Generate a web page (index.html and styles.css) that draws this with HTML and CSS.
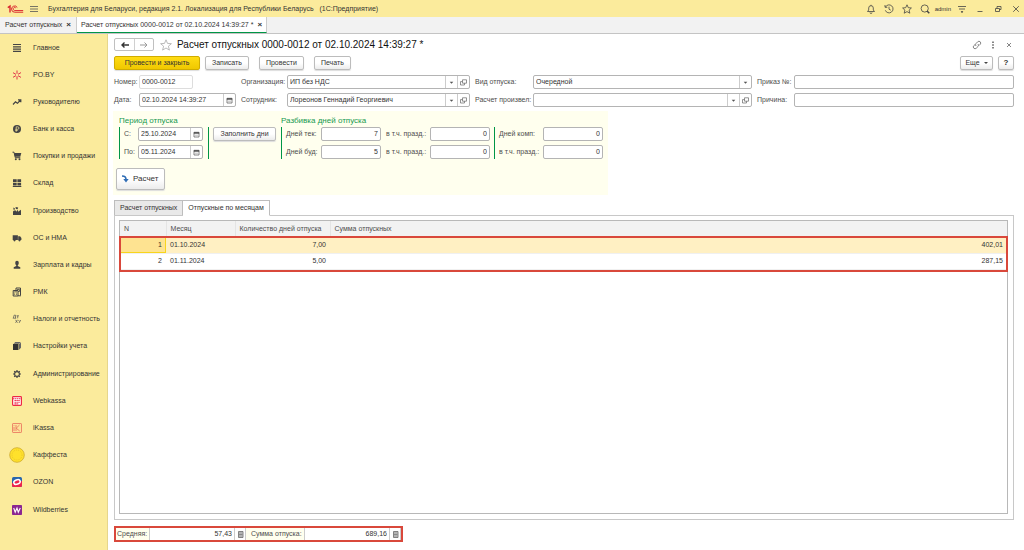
FILE: index.html
```html
<!DOCTYPE html>
<html lang="ru">
<head>
<meta charset="utf-8">
<title>Расчет отпускных</title>
<link rel="stylesheet" href="styles.css">
</head>
<body>
<svg class="defs" aria-hidden="true">
  <symbol id="cal" viewBox="0 0 7 7"><path d="M1 1.500h5v4.500H1z" fill="#fff" stroke="#666" stroke-width=".8"/><path d="M1 1.200h5v1.300H1z" fill="#555" stroke="#555" stroke-width=".5"/><path d="M2 4.200h3" stroke="#bbb"/></symbol>
  <symbol id="open" viewBox="0 0 7 7"><path d="M2.500.8h4v3.400h-4zM2.500 2.600h-2v3.400h4V4.200" fill="none" stroke="#666" stroke-width=".7"/></symbol>
  <symbol id="down" viewBox="0 0 7 7"><path d="M1.700 2.700h3.600L3.500 4.700z" fill="#555"/></symbol>
  <symbol id="calc" viewBox="0 0 7 7"><path d="M1.500.5h4.500v6H1.500z" fill="#ddd" stroke="#666" stroke-width=".8"/><path d="M2 2h3.500M2 3.500h3.500M2 5h3.500" stroke="#666" stroke-width=".7"/></symbol>
</svg>
<header class="titlebar">
  <svg class="logo" viewBox="0 0 17 10"><g fill="none" stroke="#d9252c"><path d="M.8 3.600l2.200-1.600V8.500" stroke-width="1.400"/><path d="M10.300 3.500A3.100 3.100 0 1 0 7.800 8.200h8.400" stroke-width="1"/><path d="M8.900 4.100A1.500 1.500 0 1 0 7.800 6.500h8.400" stroke-width=".9"/></g></svg>
  <svg class="burger" viewBox="0 0 8 8"><path d="M0 1.500h8M0 4h8M0 6.500h8" stroke="#555" stroke-width=".8"/></svg>
  <span class="apptitle">Бухгалтерия для Беларуси, редакция 2.1. Локализация для Республики Беларусь&nbsp;&nbsp; (1С:Предприятие)</span>
  <div class="tools">
    <button aria-label="Уведомления"><svg viewBox="0 0 10 10"><path d="M1.500 7.500h7L7.300 6V4a2.300 2.300 0 0 0-4.600 0v2zM4 8.500a1 1 0 0 0 2 0M5 .8v1" /></svg></button>
    <button aria-label="История"><svg viewBox="0 0 10 10"><path d="M1.500 3A4 4 0 1 1 1.300 6.300M1 1v2.300h2.300M5 2.700v2.500l1.800 1"/></svg></button>
    <button aria-label="Избранное"><svg viewBox="0 0 10 10"><path d="M5 .8l1.300 2.900 3.100.3-2.300 2.100.7 3.100L5 7.600 2.200 9.200l.7-3.100L.6 4l3.100-.3z"/></svg></button>
    <button aria-label="Поиск"><svg viewBox="0 0 10 10"><circle cx="4.700" cy="4.500" r="3.600"/><path d="M7 7l2.300 2.300" stroke-width="1.500"/></svg></button>
    <span class="user">admin</span>
    <button aria-label="Настройки"><svg viewBox="0 0 10 10"><path d="M1 2.500h8M2 5h6M4 8h2"/><path d="M3.700 7.300h2.600L5 8.800z" fill="#444" stroke="none"/></svg></button>
    <button aria-label="Свернуть"><svg viewBox="0 0 10 10"><path d="M2.500 7.500h5"/></svg></button>
    <button aria-label="Развернуть"><svg viewBox="0 0 10 10"><path d="M2.500 4.500h4v3h-4zM4 4.500v-2h4v3H6.500"/></svg></button>
    <button aria-label="Закрыть"><svg viewBox="0 0 10 10"><path d="M2.200 2.200l5.600 5.600M7.800 2.200L2.200 7.800"/></svg></button>
  </div>
</header>
<div class="windows">
  <button class="wtab">Расчет отпускных <b>×</b></button>
  <button class="wtab current">Расчет отпускных 0000-0012 от 02.10.2024 14:39:27 * <b>×</b></button>
</div>
<div class="body">
<nav class="side">
  <a href="#"><svg viewBox="0 0 10 10"><path d="M1 1.500h8M1 3.800h8M1 6.100h8M1 8.400h8" stroke="#444" stroke-width="1.200"/></svg>Главное</a>
  <a href="#"><svg viewBox="0 0 10 10"><path d="M5 .5v3.300M5 6.200v3.300M1 2.700l3 1.700M6 5.700l3 1.700M1 7.300l3-1.700M6 4.300l3-1.700" stroke="#e0344a" stroke-width="1"/></svg>PO.BY</a>
  <a href="#"><svg viewBox="0 0 10 10"><path d="M1 7.500l2.500-2.600 2 1.400L8.500 3M6 2.800h2.800v2.500" fill="none" stroke="#444" stroke-width="1.200"/></svg>Руководителю</a>
  <a href="#"><svg viewBox="0 0 10 10"><circle cx="5" cy="5" r="4" fill="#444"/><path d="M4.200 7.800V2.800h1.500a1.200 1.200 0 0 1 0 2.500H3.300M3.300 6.500h2.400" fill="none" stroke="#fbeb9c" stroke-width=".7"/></svg>Банк и касса</a>
  <a href="#"><svg viewBox="0 0 10 10"><path d="M.5 1.200H2l1.300 5.500h5" fill="none" stroke="#444"/><path d="M2.200 2h7.100l-1 3.800H3z" fill="#444"/><circle cx="3.800" cy="8.300" r="1" fill="#444"/><circle cx="7.500" cy="8.300" r="1" fill="#444"/></svg>Покупки и продажи</a>
  <a href="#"><svg viewBox="0 0 10 10"><path d="M1 1.300h3.700v2.900H1zM5.400 1.300h3.700v2.900H5.400zM1 4.900h3.700v2.600H1zM5.400 4.900h3.700v2.600H5.400zM.8 8h8.500v.9H.8z" fill="#444"/></svg>Склад</a>
  <a href="#"><svg viewBox="0 0 10 10"><path d="M1 9V5.500l1-1h2v1.200l2-2v2l3-2V9zM1.300 1.500l1.700 1-.4 1.300H1.500zM3.500 1l2.700.5-.6 1.800-1.700-.3z" fill="#444"/></svg>Производство</a>
  <a href="#"><svg viewBox="0 0 10 10"><path d="M.7 2.300h5.200v4.800H.7zM6.200 3.300h1.900l1.300 1.800v2H6.200z" fill="#444"/><circle cx="2.500" cy="7.300" r="1.100" fill="#444"/><circle cx="7.500" cy="7.300" r="1.100" fill="#444"/></svg>ОС и НМА</a>
  <a href="#"><svg viewBox="0 0 10 10"><ellipse cx="5" cy="3" rx="1.800" ry="2.200" fill="#444"/><path d="M1.700 8.700V7.200L4.200 6V4h1.600v2l2.500 1.200v1.500z" fill="#444"/></svg>Зарплата и кадры</a>
  <a href="#"><svg viewBox="0 0 10 10"><path d="M4 3V1h4.500v7.500M1.200 3.500H6v5.500H1.200zM6 8.800h2.800" fill="none" stroke="#444"/><path d="M2.200 4.800h2.900M5 2.500h2.500v2H6M2.300 6.200h.8M4 6.200h.8M2.300 7.500h.8M4 7.500h.8" fill="none" stroke="#444" stroke-width=".8"/></svg>РМК</a>
  <a href="#"><svg viewBox="0 0 10 10"><path d="M.8 4.200h3.400M1.400 4L2.100 1.200h1.400v3M4.500 1.800h2.500M5.700 1.800v2.500M3.500 5.800l2 3M5.500 5.800l-2 3M6.500 6l1 1.500M8.800 6L7 9" fill="none" stroke="#555" stroke-width=".7"/></svg>Налоги и отчетность</a>
  <a href="#"><svg viewBox="0 0 10 10"><path d="M1 3h5.500v6H1z" fill="#333"/><path d="M1.500 2.700L3.300 1h5.500L7 2.700zM7 3.200l2-1.800v5.400L7 8.800z" fill="#666"/></svg>Настройки учета</a>
  <a href="#"><svg viewBox="0 0 10 10"><circle cx="5" cy="5" r="2.400" fill="none" stroke="#444" stroke-width="1.100"/><path d="M5 1v1.500M5 7.500V9M1 5h1.500M7.500 5H9M2.200 2.200l1 1M6.800 6.800l1 1M7.800 2.200l-1 1M3.200 6.800l-1 1" stroke="#444" stroke-width="1.200"/></svg>Администрирование</a>
  <a href="#"><svg viewBox="0 0 10 10"><rect x=".6" y=".6" width="8.800" height="8.800" rx=".8" fill="#fff" stroke="#ee2944" stroke-width="1.200"/><path d="M1 2.700h8M2.500 4.500h5.700M2.500 6.200h5.700M2.500 7.900h4" stroke="#ee2944" stroke-width="1.100" stroke-dasharray="1.400 .5"/></svg>Webkassa</a>
  <a href="#"><svg viewBox="0 0 10 10"><rect x=".5" y=".5" width="9" height="9" rx=".6" fill="#fde39a" stroke="#e8715a" stroke-width=".8"/><path d="M2 4v4M2 2.300v.8M4 2v6M7.500 2L4.200 5.200 7.700 8" fill="none" stroke="#e8715a" stroke-width=".8"/></svg>iKassa</a>
  <a href="#"><svg class="coin" viewBox="0 0 16 16"><circle cx="8" cy="8" r="7.300" fill="#ffe12b" stroke="#cda931" stroke-width=".8"/><circle cx="8" cy="8" r="5" fill="none" stroke="#e3b92a" stroke-width=".7" stroke-dasharray="1 1"/></svg>Каффеста</a>
  <a href="#"><svg viewBox="0 0 10 10"><rect width="10" height="10" rx="1.500" fill="#2866ad"/><path d="M0 6l10-2v4.500A1.500 1.500 0 0 1 8.500 10h-7A1.500 1.500 0 0 1 0 8.500z" fill="#ec254d"/><ellipse cx="5" cy="5" rx="3.300" ry="2.200" fill="#ec254d" stroke="#fff" stroke-width="1.500" transform="rotate(-20 5 5)"/></svg>OZON</a>
  <a href="#"><svg viewBox="0 0 10 10"><rect width="10" height="10" rx=".8" fill="#8b2791"/><path d="M1.700 3l1.500 4.200L5 3l1.300 4.200L8.300 3" fill="none" stroke="#fff" stroke-width="1.100"/></svg>Wildberries</a>
</nav>
<main>
  <div class="head">
    <div class="navbtns"><button aria-label="Назад"><svg viewBox="0 0 10 8"><path d="M9 4H2M4.500 1.500L2 4l2.500 2.500" fill="none" stroke="#333" stroke-width="1.400"/></svg></button><button aria-label="Вперед"><svg viewBox="0 0 10 8"><path d="M1 4h7M5.500 1.500L8 4 5.500 6.500" fill="none" stroke="#999"/></svg></button></div>
    <svg class="star" viewBox="0 0 12 12"><path d="M6 .8l1.500 3.600 3.900.3-3 2.500 1 3.900L6 9l-3.400 2.100 1-3.900-3-2.500 3.900-.3z" fill="none" stroke="#aaa" stroke-width=".8"/></svg>
    <h1>Расчет отпускных 0000-0012 от 02.10.2024 14:39:27 *</h1>
    <div class="headtools">
      <button aria-label="Ссылка"><svg viewBox="0 0 10 10"><path d="M4 6a1.900 1.900 0 0 1 0-2.500L5.700 1.800a1.700 1.700 0 0 1 2.500 2.500L7 5.500M6 4a1.900 1.900 0 0 1 0 2.500L4.300 8.200a1.700 1.700 0 0 1-2.500-2.500L3 4.500"/></svg></button>
      <button aria-label="Меню"><svg viewBox="0 0 10 10"><path d="M5 1.500v1.600M5 4.200v1.600M5 6.900v1.600" stroke-width="1.600"/></svg></button>
      <button aria-label="Закрыть"><svg viewBox="0 0 10 10"><path d="M3 3l4 4M7 3L3 7"/></svg></button>
    </div>
  </div>
  <div class="cmds">
    <button class="btn primary">Провести и закрыть</button>
    <button class="btn">Записать</button>
    <button class="btn mid">Провести</button>
    <button class="btn mid">Печать</button>
    <span class="right"><button class="btn more">Еще <i></i></button><button class="btn help">?</button></span>
  </div>
  <div class="form">
    <label for="num">Номер:</label><div class="field soft num"><input id="num" value="0000-0012"></div>
    <label for="org">Организация:</label><div class="field"><input id="org" value="ИП без НДС"><button aria-label="Выбрать"><svg><use href="#down"/></svg></button><button aria-label="Открыть"><svg><use href="#open"/></svg></button></div>
    <label for="kind">Вид отпуска:</label><div class="field"><input id="kind" value="Очередной"><button aria-label="Выбрать"><svg><use href="#down"/></svg></button></div>
    <label for="order">Приказ №:</label><div class="field"><input id="order"></div>
    <label for="date">Дата:</label><div class="field"><input id="date" value="02.10.2024 14:39:27"><button aria-label="Календарь"><svg><use href="#cal"/></svg></button></div>
    <label for="emp">Сотрудник:</label><div class="field"><input id="emp" value="Лореонов Геннадий Георгиевич"><button aria-label="Выбрать"><svg><use href="#down"/></svg></button><button aria-label="Открыть"><svg><use href="#open"/></svg></button></div>
    <label for="by">Расчет произвел:</label><div class="field"><input id="by"><button aria-label="Выбрать"><svg><use href="#down"/></svg></button><button aria-label="Открыть"><svg><use href="#open"/></svg></button></div>
    <label for="why">Причина:</label><div class="field"><input id="why"></div>
  </div>
  <section class="calcbox">
    <div class="groups">
      <div class="group period">
        <h2>Период отпуска</h2>
        <div class="cols">
          <div class="pairs dates">
            <label for="from">С:</label><div class="field"><input id="from" value="25.10.2024"><button aria-label="Календарь"><svg><use href="#cal"/></svg></button></div>
            <label for="to">По:</label><div class="field"><input id="to" value="05.11.2024"><button aria-label="Календарь"><svg><use href="#cal"/></svg></button></div>
          </div>
          <div class="fill"><button class="btn">Заполнить дни</button></div>
        </div>
      </div>
      <div class="group">
        <h2>Разбивка дней отпуска</h2>
        <div class="cols">
          <div class="pairs days">
            <label for="d1">Дней тек:</label><div class="field n"><input id="d1" value="7"></div>
            <label for="h1">в т.ч. празд.:</label><div class="field n"><input id="h1" value="0"></div>
            <label for="d2">Дней буд:</label><div class="field n"><input id="d2" value="5"></div>
            <label for="h2">в т.ч. празд.:</label><div class="field n"><input id="h2" value="0"></div>
          </div>
          <div class="pairs comp">
            <label for="c1">Дней комп:</label><div class="field n"><input id="c1" value="0"></div>
            <label for="c2">в т.ч. празд.:</label><div class="field n"><input id="c2" value="0"></div>
          </div>
        </div>
      </div>
    </div>
    <button class="btn run"><svg viewBox="0 0 8 8"><path d="M1 1c3 0 4 1 4 3.500" fill="none" stroke="#2f6db5" stroke-width="1.700"/><path d="M2.300 4h5.400L5 7.500z" fill="#2f6db5"/></svg>Расчет</button>
  </section>
  <div class="tabs"><button>Расчет отпускных</button><button class="on">Отпускные по месяцам</button></div>
  <div class="panel">
    <div class="grid">
      <table>
        <thead><tr><th class="c1">N</th><th class="c2">Месяц</th><th class="c3">Количество дней отпуска</th><th>Сумма отпускных</th></tr></thead>
        <tbody>
          <tr class="sel"><td class="r cell">1</td><td>01.10.2024</td><td class="r">7,00</td><td class="r">402,01</td></tr>
          <tr><td class="r">2</td><td>01.11.2024</td><td class="r">5,00</td><td class="r">287,15</td></tr>
        </tbody>
      </table>
      <div class="mark"></div>
    </div>
  </div>
  <div class="totals">
    <label for="avg">Средняя:</label><div class="tot"><input id="avg" value="57,43"><button aria-label="Калькулятор"><svg><use href="#calc"/></svg></button></div>
    <label for="sum" class="second">Сумма отпуска:</label><div class="tot"><input id="sum" value="689,16"><button aria-label="Калькулятор"><svg><use href="#calc"/></svg></button></div>
  </div>
</main>
</div>
</body>
</html>
```
FILE: styles.css
```css
* { box-sizing: border-box; }
body {
  margin: 0;
  min-height: 100vh;
  display: flex;
  flex-direction: column;
  font: 7px/10px "Liberation Sans", Arial, sans-serif;
  color: #333;
  background: #fff;
}
button, input { font: inherit; color: inherit; margin: 0; padding: 0; border: 0; background: none; }
svg { display: block; flex: none; }
.defs { position: absolute; width: 0; height: 0; }

.titlebar { display: flex; align-items: center; height: 17px; padding: 0 3px 0 7px; background: #fbeb9c; }
.logo { width: 17px; height: 10px; }
.burger { width: 8px; height: 8px; margin: 0 10px 0 6px; }
.tools { margin-left: auto; display: flex; align-items: center; gap: 8px; }
.tools svg { width: 10px; height: 10px; fill: none; stroke: #444; stroke-width: 0.8; }
.user { font-size: 6px; margin: 0 -2px 0 -3px; }

.windows { display: flex; height: 17px; background: #f2f2f2; border-bottom: 1px solid #c4c4c4; }
.wtab { padding: 0 5px; border-right: 1px solid #ccc; white-space: nowrap; }
.wtab b { font-size: 8px; margin-left: 2px; }
.wtab.current { background: #fff; border-bottom: 1px solid #009646; padding: 0 4px; }

.body { flex: 1; display: flex; }
.side {
  width: 108px;
  flex: none;
  display: flex;
  flex-direction: column;
  padding-bottom: 27px;
  background: #fbeb9c;
  border-right: 1px solid #e6d68c;
}
.side a { flex: 1; display: flex; align-items: center; gap: 11px; padding-left: 12px; color: #333; text-decoration: none; white-space: nowrap; }
.side svg { width: 10px; height: 10px; }
.side .coin { width: 16px; height: 16px; margin: 0 -3px; }

main { flex: 1; min-width: 0; display: flex; flex-direction: column; padding: 4px 10px 8px 6px; }
.head { display: flex; align-items: center; height: 13px; }
.navbtns { display: flex; border: 1px solid #c0c0c0; border-radius: 2px; }
.navbtns button { width: 19px; height: 11px; display: grid; place-items: center; }
.navbtns button + button { border-left: 1px solid #d0d0d0; }
.navbtns svg { width: 10px; height: 8px; }
.star { width: 12px; height: 12px; margin: 0 5px 0 6px; }
h1 { margin: 0; font-size: 10px; line-height: 13px; font-weight: 400; color: #111; white-space: nowrap; }
.headtools { margin-left: auto; display: flex; gap: 6px; }
.headtools svg { width: 10px; height: 10px; fill: none; stroke: #666; stroke-width: 0.8; }

.cmds { display: flex; gap: 5px; margin-top: 5px; }
.btn {
  height: 14px;
  padding: 0 6px;
  border: 1px solid #bcbcbc;
  border-radius: 2px;
  background: linear-gradient(#fff 50%, #ececec);
  box-shadow: 0 1px 1px #ddd;
  white-space: nowrap;
}
.primary { width: 86px; background: linear-gradient(#ffdc14, #f0c800); border-color: #d0ac00; }
.mid { margin-left: 5px; }
.right { margin-left: auto; display: flex; gap: 5px; }
.more { width: 33px; padding: 0; }
.more i { display: inline-block; margin: 0 0 1px 2px; border: 2px solid transparent; border-top-color: #444; border-bottom: 0; }
.help { width: 16px; padding: 0; font-size: 8px; font-weight: 700; }

.form {
  display: grid;
  grid-template-columns: 25px 97px 51px 183fr 63px 219fr 42px 220fr;
  grid-auto-rows: 14px;
  row-gap: 4px;
  margin-top: 5px;
  align-items: center;
}
label { color: #4d4d4d; white-space: nowrap; }
.form label { padding-left: 5px; }
.form label:nth-of-type(4n + 1) { padding-left: 0; }
.field { display: flex; min-width: 0; height: 14px; border: 1px solid #b4b4b4; border-radius: 2px; background: #fff; }
.field input { flex: 1; width: 0; min-width: 0; padding: 0 2px; }
.field button { width: 12px; display: grid; place-items: center; border-left: 1px solid #ccc; }
.field svg, .tot svg { width: 7px; height: 7px; }
.soft { border-color: #ddd; }
.num { width: 54px; }
.n input { text-align: right; }

.calcbox { width: 495px; height: 84px; margin: 4px 0 0 -1px; padding: 4px 3px 0; background: #ffffee; }
.groups { display: flex; gap: 5px; padding-left: 3px; }
h2 { margin: 0; font-size: 8px; line-height: 12px; font-weight: 400; color: #179950; }
.cols { display: flex; }
.pairs { display: grid; grid-auto-rows: 14px; row-gap: 4px; padding-left: 4px; border-left: 1px solid #009646; align-items: center; }
.dates { grid-template-columns: 14px 65px; margin-right: 5px; }
.fill { border-left: 1px solid #009646; padding-left: 4px; }
.fill .btn { width: 63px; padding: 0; }
.days { grid-template-columns: 35px 60px 49px 60px; padding-left: 4px; }
.days label:nth-of-type(even) { padding-left: 5px; }
.comp { grid-template-columns: 44px 60px; margin-left: 4px; }
.run { display: flex; align-items: center; gap: 4px; height: 22px; margin-top: 9px; padding: 0 6px 0 4px; font-size: 8px; }
.run svg { width: 8px; height: 8px; }

.tabs { display: flex; margin-top: 5px; height: 16px; }
.tabs button { padding: 0 5px; border: 1px solid #bdbdbd; background: #e9e9e9; }
.tabs button + button { border-left: 0; }
.tabs .on { position: relative; z-index: 1; background: #fff; border-bottom-color: #fff; }
.panel { flex: 1; display: flex; margin-top: -1px; padding: 4px 5px 5px 4px; border: 1px solid #c8c8c8; }
.grid { position: relative; flex: 1; border: 1px solid #b8b8b8; }
table { width: 100%; border-collapse: collapse; table-layout: fixed; }
th, td { height: 16px; padding: 0 4px; text-align: left; font-weight: 400; }
th { background: #f2f2f2; color: #4d4d4d; border-right: 1px solid #e4e4e4; }
th:last-child { border-right: 0; }
.c1 { width: 46px; }
.c2 { width: 69px; }
.c3 { width: 95px; }
.r { text-align: right; }
.sel { background: #fff0c3; }
.sel .cell { background: #fee391; box-shadow: inset 0 0 0 1px #f8d51c; }
td { border-bottom: 1px solid #f0f0f0; }
.mark { position: absolute; top: 15px; left: -1px; right: -1px; height: 36px; border: 2px solid #d9483b; }

.totals { display: flex; align-items: center; align-self: flex-start; height: 16px; margin-top: 6px; border: 2px solid #d9483b; background: #ffffee; }
.totals label { width: 33px; padding-left: 1px; }
.totals .second { width: 58px; padding-left: 5px; }
.tot { display: flex; width: 97px; height: 12px; background: #fff; border: solid #ccc; border-width: 0 1px; }
.tot input { flex: 1; width: 0; min-width: 0; padding: 0 2px; text-align: right; }
.tot button { width: 11px; display: grid; place-items: center; border-left: 1px solid #ccc; }
```
